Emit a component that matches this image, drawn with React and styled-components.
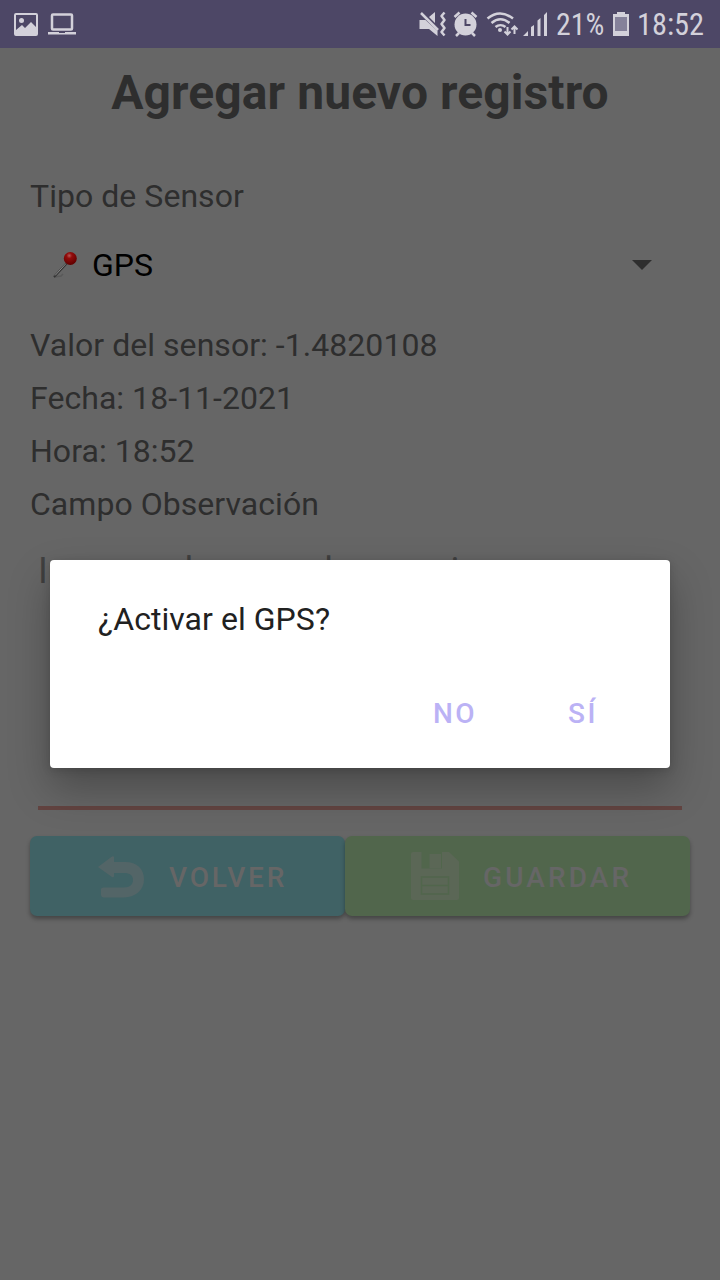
import React from "react";
import styled, { createGlobalStyle } from "styled-components";

const GlobalStyle = createGlobalStyle`
  * { box-sizing: border-box; }
  body { margin: 0; background: #666; font-family: Roboto, sans-serif; }
`;

const Screen = styled.div`
  position: relative;
  width: 720px;
  height: 1280px;
  overflow: hidden;
  background: #666;
`;

const StatusBar = styled.header`
  height: 48px;
  padding: 0 16px 0 14px;
  display: flex;
  align-items: center;
  justify-content: space-between;
  background: #4d4766;
  color: #d3d1da;
`;

const StatusGroup = styled.div`
  display: flex;
  align-items: center;
  svg { display: block; }
`;

const StatusText = styled.span`
  display: block;
  height: 48px;
  width: ${(p) => p.$width}px;
  margin-left: ${(p) => p.$gap}px;
  font-family: "Roboto Condensed", Roboto, sans-serif;
  font-size: 31px;
  line-height: 50px;
  white-space: nowrap;
  span {
    display: inline-block;
    transform: scaleX(${(p) => p.$squeeze});
    transform-origin: left center;
  }
`;

const LaptopSvg = styled.svg`
  margin-left: 10px;
`;

const BatterySvg = styled.svg`
  margin-left: 8px;
`;

const Form = styled.main`
  padding: 0 30px;
  display: flex;
  flex-direction: column;
`;

const Title = styled.h1`
  margin: 17px 0 52px;
  font-size: 48px;
  line-height: 56px;
  font-weight: 700;
  letter-spacing: 0.08px;
  text-align: center;
  color: #2e2e2e;
`;

const Label = styled.p`
  margin: 0;
  height: 53px;
  font-size: 32px;
  line-height: 46px;
  letter-spacing: 0.045px;
  white-space: nowrap;
  color: #2e2e2e;
`;

const Select = styled.div`
  height: 72px;
  margin: 3px 0 21px;
  padding: 0 38px 0 22px;
  display: flex;
  align-items: center;
  justify-content: space-between;
  font-size: 32px;
  color: #000;
`;

const Option = styled.span`
  display: flex;
  align-items: center;
  gap: 12px;
`;

const Note = styled.div`
  height: 276px;
  margin: 0 8px;
  padding: 16px 0 0;
  border-bottom: 4px solid #634441;
  font-size: 36px;
  line-height: 42px;
  color: #404040;
`;

const NoteTail = styled.span`
  word-spacing: -9px;
`;

const Actions = styled.div`
  display: flex;
  margin-top: 26px;
`;

const ActionButton = styled.button`
  width: ${(p) => p.$width}px;
  height: 80px;
  padding: 0 0 0 ${(p) => p.$inset}px;
  display: flex;
  align-items: center;
  gap: 24px;
  border: 0;
  border-radius: 7px;
  background: ${(p) => p.$color};
  box-shadow: 0 3px 4px rgba(0, 0, 0, 0.32);
  font: 500 28px/32px Roboto, sans-serif;
  letter-spacing: ${(p) => p.$tracking}px;
  color: #666;
`;

const ButtonText = styled.span`
  padding-top: 3px;
`;

const Dialog = styled.section`
  position: absolute;
  left: 50px;
  top: 560px;
  width: 620px;
  height: 208px;
  padding: 38px 48px 0;
  border-radius: 4px;
  background: #fff;
  box-shadow: 0 20px 42px rgba(0, 0, 0, 0.28), 0 2px 8px rgba(0, 0, 0, 0.15);
`;

const Question = styled.p`
  margin: 0 0 55px;
  font-size: 32px;
  line-height: 42px;
  letter-spacing: 0.05px;
  color: #212121;
`;

const DialogActions = styled.div`
  display: flex;
  justify-content: flex-end;
  gap: 91px;
  padding-right: 24px;
`;

const TextButton = styled.button`
  padding: 0;
  border: 0;
  background: none;
  font: 500 28px/38px Roboto, sans-serif;
  letter-spacing: 2.5px;
  color: #bbb2f5;
`;

const PictureIcon = () => (
  <svg width="24" height="23" viewBox="0 0 24 23">
    <rect x="1" y="1" width="22" height="21" rx="1" fill="none" stroke="currentColor" strokeWidth="2" />
    <circle cx="7.5" cy="7.5" r="2.5" fill="currentColor" />
    <path d="M2 17L8 12l3 3 6-6 5 5v8H2z" fill="currentColor" />
  </svg>
);

const LaptopIcon = () => (
  <LaptopSvg width="28" height="22" viewBox="0 0 28 22">
    <rect x="4" y="1.5" width="20" height="15" rx="1" fill="none" stroke="currentColor" strokeWidth="2.5" />
    <path d="M0 19h11v1h6v-1h11v2.500H0z" fill="currentColor" />
  </LaptopSvg>
);

const SignalIcons = () => (
  <svg width="130" height="26" viewBox="418 11 130 26" fill="none" stroke="currentColor">
    <path d="M419.500 20h6l12 11v5l-8.500-7h-9.500zM429 17l6-5v11z" fill="currentColor" stroke="none" />
    <path d="M421 13l17 17" strokeWidth="2.500" />
    <path d="M444.500 12.500l-3 3.500 3 4-3 4 3 4-3 4 3 3.500" strokeWidth="2.500" strokeLinejoin="round" />
    <circle cx="465.500" cy="24.500" r="11" fill="currentColor" stroke="none" />
    <path d="M454.500 17l5-4.500M471.500 12.500l5 4.500M459 33l-3 3M472 33l3 3" strokeWidth="2.500" />
    <path d="M465.500 19v6h5" stroke="#4d4766" strokeWidth="2" />
    <path d="M487.500 18.500c8-6.500 17-6.500 25.500 0M491.500 23c6-5 12-5 18 0M495.500 27c3-2.500 7-2.500 10 0" strokeWidth="2.500" />
    <circle cx="500" cy="30" r="2" fill="currentColor" stroke="none" />
    <path d="M507.500 27v7M504.500 31.500l3 3 3-3M514.500 34v-7M511.500 29.500l3-3 3 3" strokeWidth="2" />
    <path d="M523 36l5-5v5zM531 27l3-2v11h-3zM537.500 20.500l3-2.500v18h-3zM544 15l3-3v24h-3z" fill="currentColor" stroke="none" />
  </svg>
);

const BatteryIcon = () => (
  <BatterySvg width="16" height="24" viewBox="0 0 16 24">
    <path d="M4 0h8v2h4v22H0V2h4z" fill="currentColor" />
    <path d="M2 5h12v14H2z" fill="#85819a" />
  </BatterySvg>
);

const PinIcon = () => (
  <svg width="28" height="28" viewBox="0 0 28 28">
    <defs>
      <radialGradient id="pinHead" cx="42%" cy="28%" r="70%">
        <stop offset="0" stopColor="#b65a57" />
        <stop offset=".3" stopColor="#930c0b" />
        <stop offset="1" stopColor="#610000" />
      </radialGradient>
    </defs>
    <path d="M2 26l7-1 2-2" stroke="#595959" strokeWidth="1.500" fill="none" />
    <path d="M2 26L15 12" stroke="#333" strokeWidth="2" />
    <path d="M3 24.500L14 12.500" stroke="#8a8a8a" strokeWidth="1" />
    <circle cx="18.300" cy="7.500" r="6.500" fill="url(#pinHead)" />
  </svg>
);

const Caret = () => (
  <svg width="20" height="10" viewBox="0 0 20 10"><path d="M0 0h20L10 10z" fill="#2e2e2e" /></svg>
);

const BackIcon = () => (
  <svg width="48" height="48" viewBox="0 0 48 48">
    <path d="M1 15L15 4.500q2-1 2 1V10h11c12 0 19 7 19 17 0 11-8 18-20 18.500H7q-3 0-3-3v-5q0-2 3-2h20c6 0 9-3 9-7.500s-3-7-9-7H17v3q0 2-2 1z" fill="#536567" />
  </svg>
);

const SaveIcon = () => (
  <svg width="48" height="48" viewBox="0 0 48 48">
    <path d="M2 0h8.500v16.500H31V0h7l10 9.500V46q0 2-2 2H2q-2 0-2-2V2q0-2 2-2z" fill="#5b6756" />
    <path d="M18.500 2h11.500v14.500H18.500z" fill="#5b6756" />
    <path d="M10.500 25h27v17h-27zM10.500 33.500h27" fill="none" stroke="#51664c" strokeWidth="1.500" />
  </svg>
);

export default function App() {
  return (
    <Screen>
      <GlobalStyle />
      <StatusBar>
        <StatusGroup><PictureIcon /><LaptopIcon /></StatusGroup>
        <StatusGroup>
          <SignalIcons />
          <StatusText $width={49} $gap={8} $squeeze={0.96}><span>21%</span></StatusText>
          <BatteryIcon />
          <StatusText $width={67} $gap={8} $squeeze={0.98}><span>18:52</span></StatusText>
        </StatusGroup>
      </StatusBar>
      <Form>
        <Title>Agregar nuevo registro</Title>
        <Label>Tipo de Sensor</Label>
        <Select><Option><PinIcon />GPS</Option><Caret /></Select>
        <Label>Valor del sensor: -1.4820108</Label>
        <Label>Fecha: 18-11-2021</Label>
        <Label>Hora: 18:52</Label>
        <Label>Campo Observación</Label>
        <Note>Ingrese el<NoteTail> campo observacion</NoteTail></Note>
        <Actions>
          <ActionButton $width={315} $inset={67} $tracking={2.8} $color="#406265"><BackIcon /><ButtonText>VOLVER</ButtonText></ActionButton>
          <ActionButton $width={345} $inset={66} $tracking={3.1} $color="#51664c"><SaveIcon /><ButtonText>GUARDAR</ButtonText></ActionButton>
        </Actions>
      </Form>
      <Dialog>
        <Question>¿Activar el GPS?</Question>
        <DialogActions><TextButton>NO</TextButton><TextButton>SÍ</TextButton></DialogActions>
      </Dialog>
    </Screen>
  );
}
